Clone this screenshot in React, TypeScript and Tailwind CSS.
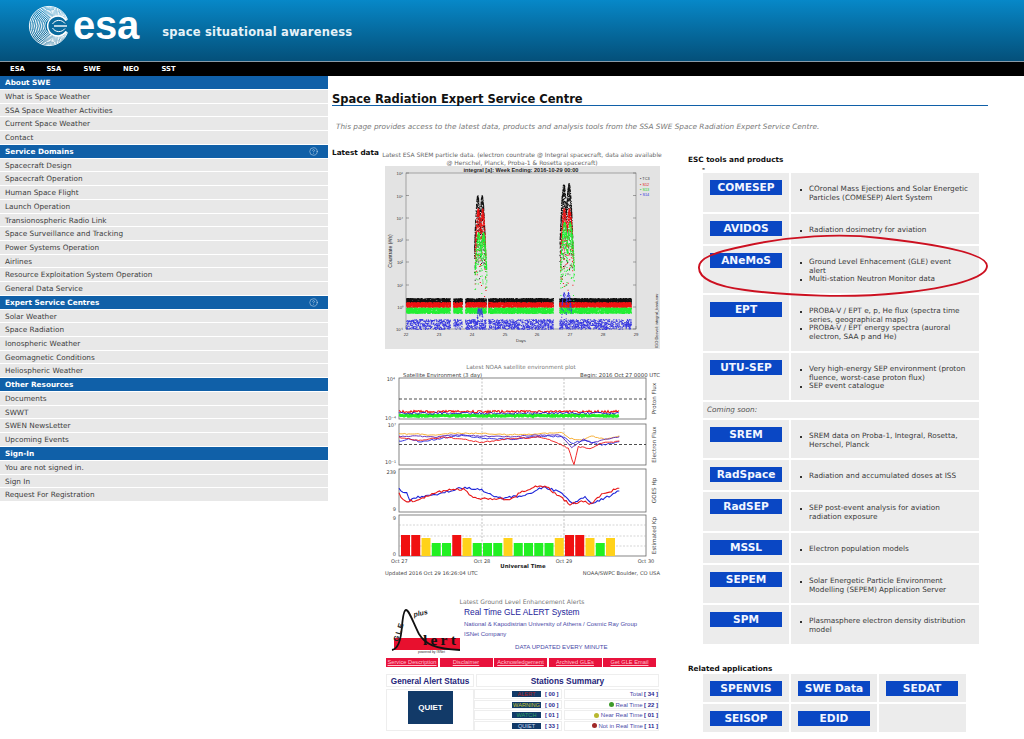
import React from "react";
import { CircleHelp } from "lucide-react";

function rng(seed: number) {
  let s = seed;
  return () => {
    s = (s * 16807) % 2147483647;
    return (s - 1) / 2147483646;
  };
}

const SANS = "font-['DejaVu_Sans',Verdana,sans-serif]";
const ARIAL = "'Liberation Sans', Arial, sans-serif";
const DEJA = "'DejaVu Sans', sans-serif";

type Side = { h: string; help?: boolean; items: string[] };
const SIDE: Side[] = [
  { h: "About SWE", items: ["What is Space Weather", "SSA Space Weather Activities", "Current Space Weather", "Contact"] },
  {
    h: "Service Domains",
    help: true,
    items: [
      "Spacecraft Design",
      "Spacecraft Operation",
      "Human Space Flight",
      "Launch Operation",
      "Transionospheric Radio Link",
      "Space Surveillance and Tracking",
      "Power Systems Operation",
      "Airlines",
      "Resource Exploitation System Operation",
      "General Data Service",
    ],
  },
  {
    h: "Expert Service Centres",
    help: true,
    items: ["Solar Weather", "Space Radiation", "Ionospheric Weather", "Geomagnetic Conditions", "Heliospheric Weather"],
  },
  { h: "Other Resources", items: ["Documents", "SWWT", "SWEN NewsLetter", "Upcoming Events"] },
  { h: "Sign-In", items: ["You are not signed in.", "Sign In", "Request For Registration"] },
];

function EsaMark() {
  const rings = [];
  for (let i = 0; i < 10; i++) {
    const r = 19.6 - i * 1.2;
    const cx = 49 + i * 0.5;
    rings.push(<circle key={i} cx={cx} cy={26} r={r} fill="none" stroke="#fff" strokeWidth={0.95} />);
  }
  return (
    <svg width={48} height={48} viewBox="26 2 48 48" className="block">
      <defs>
        <clipPath id="esaopen">
          <path d="M26 2H74V14L60 26L74 38V50H26Z" />
        </clipPath>
      </defs>
      <g clipPath="url(#esaopen)">{rings}</g>
      <circle cx={58} cy={26} r={9.5} fill="#0a6a9e" />
      <path d="M66 20.5A10 10 0 1 0 66 31.5" fill="none" stroke="#fff" strokeWidth={1.5} />
      <path d="M65 23.5A7.5 7.5 0 0 0 52.5 24M65 28.5A7.5 7.5 0 0 1 52.5 28" fill="none" stroke="#fff" strokeWidth={1} />
      <path d="M54 26H67" stroke="#fff" strokeWidth={1.4} />
    </svg>
  );
}

function squares(pts: [number, number][], s = 1) {
  return pts.map(([x, y]) => `M${x.toFixed(1)} ${y.toFixed(1)}h${s}v${s}h-${s}z`).join("");
}

function sremData() {
  const r = rng(4242);
  const inGap = (x: number) => (x > 450 && x < 453) || (x > 462 && x < 465) || (x > 553 && x < 559) || (x > 486 && x < 488);
  const band = (y0: number, y1: number, n: number) => {
    const p: [number, number][] = [];
    for (let i = 0; i < n; i++) {
      const x = 406 + r() * 225;
      if (inGap(x)) continue;
      p.push([x, y0 + r() * (y1 - y0)]);
    }
    return p;
  };
  const spike = (cx: number, hw: number, top: number, bottom: number, n: number) => {
    const p: [number, number][] = [];
    for (let i = 0; i < n; i++) {
      const dx = (r() * 2 - 1) * hw;
      const a = Math.abs(dx) / hw;
      const env = Math.abs(a - 0.4) / 0.6;
      const ty = top + env * env * (bottom - top) * 0.5;
      p.push([cx + dx, ty + r() * r() * r() * (bottom - ty)]);
    }
    return p;
  };
  return {
    black: [...band(298, 304, 5500), ...spike(479.5, 5.5, 195, 302, 480), ...spike(566, 6.5, 183, 302, 600)],
    red: [...band(302, 307, 5000), ...spike(480, 5.5, 208, 306, 400), ...spike(566.5, 6.5, 208, 306, 440)],
    green: [...band(307.5, 313, 5000), ...spike(480.5, 6, 232, 312, 420), ...spike(567, 7, 222, 312, 480)],
    blue: [...band(319, 329, 2200), ...spike(479.5, 3, 308, 329, 70), ...spike(566, 5, 292, 329, 100)],
  };
}
const SREM = sremData();

function SremChart() {
  const ys = [173, 195.5, 218, 240, 262, 285, 307, 329];
  const labels = ["10⁶", "10⁵", "10⁴", "10³", "10²", "10¹", "10⁰", "10⁻¹"];
  const xs = [406, 439, 472, 505, 537, 570, 603, 636];
  const days = ["22", "23", "24", "25", "26", "27", "28", "29"];
  return (
    <svg width={275} height={183} viewBox="385 166 275 183" className="block" style={{ fontFamily: ARIAL }}>
      <rect x={385} y={166} width={275} height={183} fill="#e3e3e3" />
      <text x={521} y={172} fontSize={5.6} fontWeight={700} textAnchor="middle" fill="#222">
        integral [a]: Week Ending: 2016-10-29 00:00
      </text>
      <rect x={406} y={173} width={230} height={156} fill="#e6e6e6" stroke="#777" strokeWidth={0.6} />
      {ys.map((y, i) => (
        <g key={y}>
          <path d={`M406 ${y}h3M636 ${y}h-3`} stroke="#555" strokeWidth={0.5} />
          <text x={403} y={y + 2} fontSize={4.2} textAnchor="end" fill="#333">
            {labels[i]}
          </text>
        </g>
      ))}
      {xs.map((x, i) => (
        <g key={x}>
          <path d={`M${x} 329v-3`} stroke="#555" strokeWidth={0.5} />
          <text x={x} y={336} fontSize={4.2} textAnchor="middle" fill="#333">
            {days[i]}
          </text>
        </g>
      ))}
      <path d={squares(SREM.black)} fill="#111" />
      <path d={squares(SREM.red)} fill="#ee1111" />
      <path d={squares(SREM.green)} fill="#22ee33" />
      <path d={squares(SREM.blue)} fill="#3a3ae0" />
      <text x={521} y={342} fontSize={4.4} textAnchor="middle" fill="#333">
        Days
      </text>
      <text transform="translate(392 251) rotate(-90)" fontSize={5} textAnchor="middle" fill="#222">
        Countrate (#/s)
      </text>
      {[
        ["TC3", "#333", 180],
        ["S12", "#d22", 185.5],
        ["S13", "#2c2", 191],
        ["S14", "#33d", 196],
      ].map(([t, c, y]) => (
        <text key={t as string} x={640} y={y as number} fontSize={3.8} fill={c as string}>
          ▪ {t}
        </text>
      ))}
      <text transform="translate(660 347) rotate(-90)" x={-1} y={-2} fontSize={4} fill="#222">
        IGO Dosvol: integral_bank.sav
      </text>
    </svg>
  );
}

const zp = (a: number[][]) =>
  a.map(([x, y]) => `${(375 + x / 3).toFixed(1)},${(360 + y / 3).toFixed(1)}`).join(" ");

function jitter(a: number[][], amp: number, seed: number) {
  const r = rng(seed);
  const out: number[][] = [];
  for (let i = 0; i < a.length - 1; i++) {
    const [x0, y0] = a[i];
    const [x1, y1] = a[i + 1];
    const n = Math.max(1, Math.round((x1 - x0) / 6));
    for (let k = 0; k < n; k++) {
      const t = k / n;
      out.push([x0 + (x1 - x0) * t, y0 + (y1 - y0) * t + (r() - 0.5) * amp]);
    }
  }
  out.push(a[a.length - 1]);
  return out;
}

const HP_BLUE = [[72, 388],[95, 400],[105, 420],[135, 410],[170, 408],[215, 395],[270, 382],[320, 390],[370, 415],[415, 410],[450, 405],[505, 382],[555, 395],[590, 430],[630, 410],[650, 430],[690, 415],[733, 393]];
const HP_RED = [[72, 402],[90, 425],[130, 420],[165, 405],[205, 392],[265, 388],[300, 415],[340, 415],[410, 418],[430, 402],[470, 382],[515, 380],[540, 400],[585, 432],[625, 425],[648, 432],[680, 402],[733, 385]];
const EL_A = [[72, 222],[130, 222],[170, 226],[230, 220],[320, 220],[400, 224],[480, 222],[560, 218],[585, 235],[620, 240],[650, 228],[690, 238],[733, 228]];
const EL_B = [[72, 230],[130, 228],[180, 232],[240, 224],[320, 228],[400, 230],[480, 226],[555, 225],[590, 262],[625, 238],[650, 250],[680, 240],[733, 230]];
const EL_C = [[72, 245],[100, 235],[135, 245],[200, 235],[260, 226],[330, 235],[410, 238],[500, 228],[565, 230],[590, 250],[630, 240],[680, 255],[733, 245]];
const EL_D = [[72, 232],[130, 242],[200, 232],[260, 236],[320, 248],[400, 236],[500, 232],[540, 245],[580, 265],[597, 314],[610, 260],[645, 265],[680, 250],[733, 243]];

function proton(y: number, seed: number, amp: number) {
  const r = rng(seed);
  const p = [];
  for (let x = 72; x <= 733; x += 3) p.push([x, y + (r() - 0.5) * amp]);
  return zp(p);
}

const BARS: [string, number][] = [
  ["r", 21], ["r", 21], ["y", 18], ["g", 13], ["g", 13], ["r", 21], ["y", 18], ["g", 13], ["g", 13], ["g", 13], ["y", 18],
  ["g", 13], ["g", 13], ["g", 13], ["g", 13], ["y", 18], ["r", 21], ["r", 21], ["y", 18], ["g", 13], ["y", 18],
];
const BC: Record<string, string> = { r: "#f01010", y: "#ffd21a", g: "#22f022" };

function NoaaChart() {
  const panels: [number, number, string][] = [
    [378, 419, "Proton Flux"],
    [424, 465, "Electron Flux"],
    [469, 512, "GOES Hp"],
    [515, 556, "Estimated Kp"],
  ];
  return (
    <svg width={280} height={216} viewBox="382 363 280 216" className="block" style={{ fontFamily: DEJA }}>
      <text x={521} y={369} fontSize={5.6} textAnchor="middle" fill="#777">
        Latest NOAA satellite environment plot
      </text>
      <text x={403} y={377} fontSize={5.4} fill="#444">
        Satellite Environment (3 day)
      </text>
      <text x={660} y={377} fontSize={5.4} textAnchor="end" fill="#444">
        Begin:  2016 Oct 27 0000 UTC
      </text>
      {panels.map(([a, b, t]) => (
        <g key={t}>
          <rect x={399} y={a} width={247} height={b - a} fill="#fff" stroke="#666" strokeWidth={0.8} />
          <path d={`M482 ${a}V${b}M564 ${b}V${a}`} stroke="#999" strokeWidth={0.6} strokeDasharray="2 1.5" />
          <text transform={`translate(656 ${(a + b) / 2}) rotate(-90)`} fontSize={5.6} textAnchor="middle" fill="#444">
            {t}
          </text>
        </g>
      ))}
      <path d="M399 399H646" stroke="#222" strokeWidth={0.8} strokeDasharray="3 2" />
      <polyline points={proton(167, 31, 4)} fill="none" stroke="#22f022" strokeWidth={3} />
      <polyline points={proton(155, 17, 7)} fill="none" stroke="#ee1111" strokeWidth={1.1} />
      <polyline points={proton(160, 57, 7)} fill="none" stroke="#2222cc" strokeWidth={0.9} />
      <path d="M399 444.5H646" stroke="#222" strokeWidth={0.8} strokeDasharray="3 2" />
      <polyline points={zp(jitter(EL_A, 3, 11))} fill="none" stroke="#f5a623" strokeWidth={0.9} />
      <polyline points={zp(jitter(EL_B, 3, 12))} fill="none" stroke="#5522bb" strokeWidth={0.9} />
      <polyline points={zp(jitter(EL_C, 4, 13))} fill="none" stroke="#2222dd" strokeWidth={0.9} />
      <polyline points={zp(jitter(EL_D, 4, 14))} fill="none" stroke="#ee1111" strokeWidth={0.9} />
      <polyline points={zp(jitter(HP_BLUE, 7, 21))} fill="none" stroke="#1a22d8" strokeWidth={1.1} />
      <polyline points={zp(jitter(HP_RED, 7, 22))} fill="none" stroke="#e81818" strokeWidth={1.1} />
      {[525, 536, 546].map((y) => (
        <path key={y} d={`M399 ${y}H646`} stroke="#aaa" strokeWidth={0.5} strokeDasharray="2 1.5" />
      ))}
      {BARS.map(([c, h], i) => (
        <rect key={i} x={401 + i * 10.25} y={556 - h} width={9} height={h} fill={BC[c]} />
      ))}
      <g fontSize={5} fill="#444">
        <text x={395} y={381} textAnchor="end">10⁴</text>
        <text x={396} y={420} textAnchor="end">10⁻⁴</text>
        <text x={396} y={427} textAnchor="end">10⁷</text>
        <text x={396} y={464} textAnchor="end">10⁻¹</text>
        <text x={396} y={474} textAnchor="end">239</text>
        <text x={396} y={511} textAnchor="end">9</text>
        <text x={396} y={520} textAnchor="end">9</text>
        <text x={396} y={556} textAnchor="end">0</text>
        <text x={391} y={563}>Oct 27</text>
        <text x={482} y={563} textAnchor="middle">Oct 28</text>
        <text x={564} y={563} textAnchor="middle">Oct 29</text>
        <text x={646} y={563} textAnchor="middle">Oct 30</text>
      </g>
      <text x={523} y={568} fontSize={5.4} fontWeight={700} textAnchor="middle" fill="#222">
        Universal Time
      </text>
      <text x={385} y={575} fontSize={5.2} fill="#444">
        Updated 2016 Oct 29 16:26:04 UTC
      </text>
      <text x={660} y={575} fontSize={5.2} textAnchor="end" fill="#444">
        NOAA/SWPC Boulder, CO USA
      </text>
    </svg>
  );
}

function GleLogo() {
  return (
    <svg width={70} height={48} viewBox="391 606 70 48" className="block shrink-0 overflow-visible">
      <path d="M394 638H460V650H394Z" fill="#e8102e" />
      <path
        d="M392 650C398 649 401 640 402 626C403 615 404 610 406 610C409 610 413 622 419 634C425 644 435 649 460 650"
        fill="none"
        stroke="#111"
        strokeWidth={1.8}
      />
      <text transform="translate(398 642) rotate(-72)" fontSize={7.5} fontWeight={700} letterSpacing={1.6} fontFamily={ARIAL} fill="#222">
        GLE
      </text>
      <text transform="translate(414 617) rotate(-12)" fontSize={7} fontWeight={700} fontStyle="italic" fontFamily={ARIAL} fill="#222">
        plus
      </text>
      <text x={423} y={645} fontSize={15.5} fontWeight={700} letterSpacing={3.2} fontFamily="'Liberation Serif', serif" fill="#111">
        lert
      </text>
      <text x={418} y={653} fontSize={3.4} fontFamily={ARIAL} fill="#333">
        powered by ISNet
      </text>
    </svg>
  );
}

const NAVY = "text-[#25259a]";

function GleBlock() {
  const links: [string, string][] = [
    ["Service Description", "w-[52px]"],
    ["Disclaimer", "w-[53px]"],
    ["Acknowledgement", "w-[53px]"],
    ["Archived GLEs", "w-[53px]"],
    ["Get GLE Email", "w-[53px]"],
  ];
  const stat: [string, string, string][] = [
    ["ALERT", "text-[#b02020]", "[ 00 ]"],
    ["WARNING", "text-[#c8c830]", "[ 00 ]"],
    ["WATCH", "text-[#30a060]", "[ 01 ]"],
    ["QUIET", "text-[#c8d8f0]", "[ 33 ]"],
  ];
  const tot: [string | null, string, string][] = [
    [null, "Total", "[ 34 ]"],
    ["bg-[#3d9a2a]", "Real Time", "[ 22 ]"],
    ["bg-[#b8b830]", "Near Real Time", "[ 01 ]"],
    ["bg-[#a02828]", "Not in Real Time", "[ 11 ]"],
  ];
  return (
    <div className="mt-[19px] w-[280px]" style={{ fontFamily: ARIAL }}>
      <p className={`${SANS} h-[8px] text-center text-[6.1px] leading-[8px] text-[#777]`}>Latest Ground Level Enhancement Alerts</p>
      <div className="flex h-[47px] pl-[9px]">
        <GleLogo />
        <div className="ml-[3px] min-w-0">
          <p className={`text-[8.4px] leading-[12px] whitespace-nowrap ${NAVY}`}>Real Time GLE ALERT System</p>
          <p className="mt-[2px] text-[6px] leading-[9px] whitespace-nowrap text-[#4a4aa8]">National &amp; Kapodistrian University of Athens / Cosmic Ray Group</p>
          <p className="mt-[1px] text-[6px] leading-[9px] whitespace-nowrap text-[#4a4aa8]">ISNet Company</p>
          <p className="mt-[3px] pl-[51px] text-[6.1px] leading-[9px] whitespace-nowrap text-[#4a4aa8]">DATA UPDATED EVERY MINUTE</p>
        </div>
      </div>
      <div className="mt-[5px] ml-[4px] flex w-[274px] gap-[1.5px]">
        {links.map(([t, w]) => (
          <div key={t} className={`${w} h-[9px] overflow-hidden bg-[#e8123c] text-center text-[5.7px] leading-[8px] whitespace-nowrap text-[#ffc0cc] underline`}>
            {t}
          </div>
        ))}
      </div>
      <div className="mt-[7px] ml-[4px] grid w-[273px] grid-cols-[88px_183px] gap-[2px] text-[#4a4aa8]">
        <div className="h-[13px] border border-[#eeeeee] text-center text-[8.2px] font-bold leading-[13px] whitespace-nowrap text-[#25257a]">General Alert Status</div>
        <div className="h-[13px] border border-[#eeeeee] text-center text-[8.4px] font-bold leading-[13px] text-[#25257a]">Stations Summary</div>
        <div className="flex h-[42px] items-start justify-center border border-[#eeeeee] pl-[1px] pt-[1px]">
          <div className="flex h-[33px] w-[45px] items-center justify-center bg-[#123a68] text-[8px] font-bold text-white">QUIET</div>
        </div>
        <div className="-ml-[2px] flex flex-col gap-[1px]">
          {stat.map(([s, c, n], i) => (
            <div key={s} className="flex h-[9.7px] gap-[2px]">
              <div className="flex w-[88px] items-center justify-end gap-[4px] border border-[#eeeeee]">
                <span className={`h-[6px] w-[29px] bg-[#123a68] text-center text-[5.6px] leading-[6px] ${c}`}>{s}</span>
                <span className="w-[16px] text-[5.8px] font-bold leading-[8px] whitespace-nowrap text-[#2a2a90]">{n}</span>
              </div>
              <div className="flex flex-1 items-center justify-end gap-[1.5px] border border-[#eeeeee] text-[6px] leading-[8px] whitespace-nowrap">
                {tot[i][0] && <span className={`h-[5px] w-[5px] rounded-full ${tot[i][0]}`} />}
                <span>{tot[i][1]}</span>
                <span className="font-bold text-[#2a2a90]">{tot[i][2]}</span>
              </div>
            </div>
          ))}
        </div>
      </div>
    </div>
  );
}

type Tool = { n: string; h: string; l: React.ReactNode[] };
const TOOLS_A: Tool[] = [
  { n: "COMESEP", h: "h-[39px]", l: [<>COronal Mass Ejections and Solar Energetic<br />Particles (COMESEP) Alert System</>] },
  { n: "AVIDOS", h: "h-[30px]", l: ["Radiation dosimetry for aviation"] },
  { n: "ANeMoS", h: "h-[47px]", l: [<>Ground Level Enhacement (GLE) event<br />alert</>, "Multi-station Neutron Monitor data"] },
  { n: "EPT", h: "h-[56px]", l: [<>PROBA-V / EPT e, p, He flux (spectra time<br />series, geographical maps)</>, <>PROBA-V / EPT energy spectra (auroral<br />electron, SAA p and He)</>] },
  { n: "UTU-SEP", h: "h-[47px]", l: [<>Very high-energy SEP environment (proton<br />fluence, worst-case proton flux)</>, "SEP event catalogue"] },
];
const TOOLS_B: Tool[] = [
  { n: "SREM", h: "h-[38px]", l: [<>SREM data on Proba-1, Integral, Rosetta,<br />Herschel, Planck</>] },
  { n: "RadSpace", h: "h-[30px]", l: ["Radiation and accumulated doses at ISS"] },
  { n: "RadSEP", h: "h-[39px]", l: [<>SEP post-event analysis for aviation<br />radiation exposure</>] },
  { n: "MSSL", h: "h-[30px]", l: ["Electron population models"] },
  { n: "SEPEM", h: "h-[38px]", l: [<>Solar Energetic Particle Environment<br />Modelling (SEPEM) Application Server</>] },
  { n: "SPM", h: "h-[39px]", l: [<>Plasmasphere electron density distribution<br />model</>] },
];

function Btn({ n }: { n: string }) {
  return (
    <div className="mx-[7px] mt-[7px] h-[15px] w-[72px] bg-[#0a47c4] text-center text-[10.6px] font-bold leading-[14px] whitespace-nowrap text-[#f2f6ff]">
      {n}
    </div>
  );
}

function ToolRow({ t }: { t: Tool }) {
  return (
    <>
      <div className={`${t.h} bg-[#ececec]`}>
        <Btn n={t.n} />
      </div>
      <div className={`${t.h} bg-[#ececec] pt-[12px] pl-[9px]`}>
        {t.l.map((x, i) => (
          <div key={i} className="flex text-[7.3px] leading-[8.7px] whitespace-nowrap text-[#3a3a3a]">
            <span className="mt-[3.5px] mr-[7px] h-[2px] w-[2px] shrink-0 bg-[#333]" />
            <span>{x}</span>
          </div>
        ))}
      </div>
    </>
  );
}

export default function App() {
  return (
    <div className={`relative h-[739px] w-full overflow-hidden bg-white ${SANS}`}>
      <header className="flex h-[61px] items-start bg-gradient-to-b from-[#0788c8] to-[#04507a]">
        <div className="ml-[26px] mt-[2px]">
          <EsaMark />
        </div>
        <span className="-ml-[1px] mt-[3px] text-[40px] font-bold leading-[44px] tracking-[-0.2px] text-white font-['Liberation_Sans',Arial,sans-serif]">esa</span>
        <span className="ml-[23px] mt-[24px] text-[11.5px] font-bold leading-[16px] tracking-[0.22px] whitespace-nowrap text-[#e6f2f8]">space situational awareness</span>
      </header>
      <div className="h-[1px] bg-[#8a9aa6]" />
      <nav className="flex h-[14px] items-center bg-black pl-[10px] text-[6.8px] font-bold text-white">
        <span className="w-[36.5px]">ESA</span>
        <span className="w-[37px]">SSA</span>
        <span className="w-[39.5px]">SWE</span>
        <span className="w-[38.5px]">NEO</span>
        <span>SST</span>
      </nav>
      <div className="flex">
        <aside className="w-[328px] shrink-0">
          {SIDE.map((s) => (
            <div key={s.h}>
              <div className="mb-[1px] flex h-[13px] items-center justify-between bg-[#1060a8] pl-[5px] pr-[10px] text-[7.3px] font-bold leading-[13px] text-white">
                <span className="pt-[0.6px]">{s.h}</span>
                {s.help && <CircleHelp size={9} strokeWidth={1.4} className="text-[#cfe0f0]" />}
              </div>
              {s.items.map((t) => (
                <div key={t} className="mb-[1px] h-[12.7px] bg-[#e8e8e8] pl-[5px] text-[7.3px] leading-[13.4px] text-[#3d3d3d]">
                  {t}
                </div>
              ))}
            </div>
          ))}
        </aside>
        <main className="min-w-0 flex-1 pl-[4px]">
          <h1 className="mt-[15px] h-[15px] w-[656px] border-b border-[#1060a8] text-[11.5px] font-bold leading-[16px] whitespace-nowrap text-[#111]">
            Space Radiation Expert Service Centre
          </h1>
          <p className="mt-[16px] h-[9px] pl-[4px] text-[7.33px] italic leading-[9px] whitespace-nowrap text-[#7a7a7a]">
            This page provides access to the latest data, products and analysis tools from the SSA SWE Space Radiation Expert Service Centre.
          </p>
          <div className="relative mt-[17px] flex">
            <div className="w-[50px] shrink-0 text-[7.3px] font-bold leading-[10px] whitespace-nowrap text-[#111]">Latest data</div>
            <div className="w-[280px] shrink-0">
              <p className="h-[18px] pt-[3px] text-center text-[6px] leading-[7.5px] whitespace-nowrap text-[#666]">
                Latest ESA SREM particle data. (electron countrate @ Integral spacecraft, data also available
                <br />@ Herschel, Planck, Proba-1 &amp; Rosetta spacecraft)
              </p>
              <div className="pl-[3px]">
                <SremChart />
              </div>
              <div className="mt-[14px]">
                <NoaaChart />
              </div>
              <GleBlock />
            </div>
            <div className="ml-[26px] w-[300px] shrink-0">
              <div className="h-[25px] pt-[7px] text-[7.3px] font-bold leading-[10px] text-[#111]">
                ESC tools and products
                <div className="pl-[14px] leading-[7px]">-</div>
              </div>
              <div className="ml-[15px] grid w-[276px] grid-cols-[86px_188px] gap-[2px]">
                {TOOLS_A.map((t) => (
                  <ToolRow key={t.n} t={t} />
                ))}
                <div className="col-span-2 h-[16px] bg-[#ececec] pl-[4px] text-[7.3px] italic leading-[16px] text-[#555]">Coming soon:</div>
                {TOOLS_B.map((t) => (
                  <ToolRow key={t.n} t={t} />
                ))}
              </div>
              <div className="mt-[20px] h-[10px] text-[7.3px] font-bold leading-[10px] text-[#111]">Related applications</div>
              <div className="ml-[15px] grid w-[263px] grid-cols-[86px_86px_87px] gap-[2px]">
                {["SPENVIS", "SWE Data", "SEDAT", "SEISOP", "EDID"].map((n) => (
                  <div key={n} className="h-[28px] bg-[#ececec]">
                    <Btn n={n} />
                  </div>
                ))}
                <div className="h-[28px] bg-[#ececec]" />
              </div>
              <svg width={296} height={70} viewBox="695 230 296 70" className="absolute left-[363px] top-[82px]">
                <path
                  d="M699 268C698 258 715 252 745 246C790 236 840 233 880 238C925 243 987 252 987 266C987 278 950 288 900 293C850 298 790 296 745 290C715 286 699 278 699 268Z"
                  fill="none"
                  stroke="#cc1020"
                  strokeWidth={1.9}
                />
              </svg>
            </div>
          </div>
        </main>
      </div>
    </div>
  );
}
